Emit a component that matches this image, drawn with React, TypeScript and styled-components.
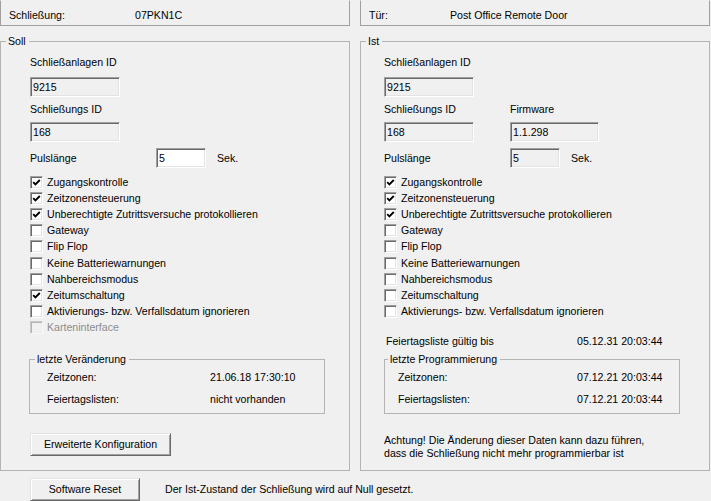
import React from "react";
import styled, { createGlobalStyle } from "styled-components";

const GlobalStyle = createGlobalStyle`
  html, body { margin: 0; padding: 0; background: #f0f0f0; }
  body {
    font-family: "Liberation Sans", Arial, sans-serif;
    font-size: 10.6px;
    color: #000;
  }
  * { box-sizing: border-box; }
`;

const Page = styled.div`
  width: 711px;
  height: 501px;
  overflow: hidden;
  background: #f0f0f0;
  line-height: 13px;
`;

const Columns = styled.div`
  display: grid;
  grid-template-columns: 350px 350px;
  column-gap: 10px;
`;

const Column = styled.div`
  display: flex;
  flex-direction: column;
`;

const HeaderPanel = styled.div`
  height: 26px;
  border: 1px solid #a0a0a0;
  border-top-color: transparent;
  padding: 4px 0 0 8px;
  display: flex;
  align-items: center;
`;

const HeaderLabel = styled.span<{ $w: number }>`
  width: ${(p) => p.$w}px;
  flex: none;
`;

const GroupBox = styled.div<{ $pad: number }>`
  position: relative;
  margin-top: 15px;
  height: 430px;
  border: 1px solid #b4b4b4;
  padding: 14px 0 0 ${(p) => p.$pad}px;
  display: flex;
  flex-direction: column;
  align-items: flex-start;
`;

const Legend = styled.span<{ $left?: number }>`
  position: absolute;
  top: -7px;
  left: ${(p) => p.$left ?? 5}px;
  padding: 0 3px 0 2px;
  background: #f0f0f0;
  line-height: 13px;
  white-space: nowrap;
`;

const FieldLabel = styled.div<{ $mt?: number }>`
  margin-top: ${(p) => p.$mt ?? 0}px;
  height: 13px;
`;

const Row = styled.div<{ $mt?: number }>`
  display: flex;
  align-items: flex-end;
  margin-top: ${(p) => p.$mt ?? 0}px;
`;

const Cell = styled.div<{ $w: number }>`
  width: ${(p) => p.$w}px;
  flex: none;
  display: flex;
  flex-direction: column;
`;

const TextBox = styled.div<{ $w: number; $editable?: boolean; $mt?: number }>`
  width: ${(p) => p.$w}px;
  height: 20px;
  margin-top: ${(p) => p.$mt ?? 0}px;
  flex: none;
  display: flex;
  align-items: center;
  padding-left: 2px;
  background: ${(p) => (p.$editable ? "#ffffff" : "#f0f0f0")};
  border-style: solid;
  border-width: 1px;
  border-color: #a0a0a0 #ffffff #ffffff #a0a0a0;
  box-shadow: inset 1px 1px #696969, inset -1px -1px #e3e3e3;
`;

const PulseRow = styled.div`
  display: flex;
  align-items: center;
  margin-top: 6px;
`;

const PulseLabel = styled.span`
  width: 126px;
  flex: none;
`;

const Unit = styled.span`
  margin-left: 11px;
`;

const CheckList = styled.div`
  display: flex;
  flex-direction: column;
  margin-top: 6px;
`;

const CheckRow = styled.div<{ $disabled?: boolean }>`
  height: 16.2px;
  display: flex;
  align-items: center;
  gap: 4px;
  color: ${(p) => (p.$disabled ? "#8d8d8d" : "#000")};
  white-space: nowrap;
`;

const Box = styled.span<{ $disabled?: boolean }>`
  width: 13px;
  height: 13px;
  flex: none;
  border-style: solid;
  border-width: 1px;
  border-color: ${(p) =>
    p.$disabled ? "#c8c8c8 #f8f8f8 #f8f8f8 #c8c8c8" : "#a0a0a0 #ffffff #ffffff #a0a0a0"};
  box-shadow: ${(p) =>
    p.$disabled
      ? "inset 1px 1px #b4b4b4, inset -1px -1px #ececec"
      : "inset 1px 1px #696969, inset -1px -1px #e3e3e3"};
  background: ${(p) => (p.$disabled ? "#f0f0f0" : "#ffffff")};
  display: flex;
  align-items: center;
  justify-content: center;
`;

const InfoRow = styled.div<{ $mt?: number; $pl?: number }>`
  display: flex;
  align-items: center;
  height: 13px;
  margin-top: ${(p) => p.$mt ?? 0}px;
  padding-left: ${(p) => p.$pl ?? 0}px;
  white-space: nowrap;
`;

const InfoLabel = styled.span<{ $w: number }>`
  width: ${(p) => p.$w}px;
  flex: none;
`;

const SubGroup = styled.div<{ $mt: number; $ml?: number }>`
  position: relative;
  margin-top: ${(p) => p.$mt}px;
  margin-left: ${(p) => p.$ml ?? 0}px;
  width: 296px;
  height: 55px;
  border: 1px solid #b4b4b4;
  padding: 7px 0 2px 0;
  display: flex;
  flex-direction: column;
`;

const SubRow = styled.div<{ $pl: number }>`
  height: 22px;
  display: flex;
  align-items: center;
  padding-left: ${(p) => p.$pl}px;
  white-space: nowrap;
`;

const Button = styled.button<{ $w: number; $mt?: number }>`
  width: ${(p) => p.$w}px;
  height: 23px;
  margin-top: ${(p) => p.$mt ?? 0}px;
  padding: 0;
  font: inherit;
  color: #000;
  background: #f0f0f0;
  border-style: solid;
  border-width: 1px;
  border-color: #e3e3e3 #696969 #696969 #e3e3e3;
  box-shadow: inset 1px 1px #ffffff, inset -1px -1px #a0a0a0;
  flex: none;
`;

const Warning = styled.div`
  margin-top: 20px;
  line-height: 13px;
`;

const Footer = styled.div`
  display: flex;
  align-items: center;
  margin-top: 7px;
  padding-left: 30px;
`;

const FooterText = styled.span`
  margin-left: 25px;
  white-space: nowrap;
`;

const Check = () => (
  <svg width="9" height="9" viewBox="0 0 9 9">
    <path d="M1.2 4.2 L3.4 6.4 L7.8 2" fill="none" stroke="#000" strokeWidth="1.9" />
  </svg>
);

type Opt = { label: string; checked: boolean; disabled?: boolean };

const CheckItem = ({ label, checked, disabled }: Opt) => (
  <CheckRow $disabled={disabled}>
    <Box $disabled={disabled}>{checked && <Check />}</Box>
    <span>{label}</span>
  </CheckRow>
);

const baseOptions = [
  "Zugangskontrolle",
  "Zeitzonensteuerung",
  "Unberechtigte Zutrittsversuche protokollieren",
  "Gateway",
  "Flip Flop",
  "Keine Batteriewarnungen",
  "Nahbereichsmodus",
  "Zeitumschaltung",
  "Aktivierungs- bzw. Verfallsdatum ignorieren",
];

const sollChecked = [true, true, true, false, false, false, false, true, false];
const istChecked = [true, true, true, false, false, false, false, false, false];

export default function App() {
  return (
    <Page>
      <GlobalStyle />
      <Columns>
        <Column>
          <HeaderPanel>
            <HeaderLabel $w={126}>Schließung:</HeaderLabel>
            <span>07PKN1C</span>
          </HeaderPanel>
          <GroupBox $pad={29}>
            <Legend>Soll</Legend>
            <FieldLabel>Schließanlagen ID</FieldLabel>
            <TextBox $w={90} $mt={8}>9215</TextBox>
            <FieldLabel $mt={6}>Schließungs ID</FieldLabel>
            <TextBox $w={90} $mt={6}>168</TextBox>
            <PulseRow>
              <PulseLabel>Pulslänge</PulseLabel>
              <TextBox $w={50} $editable>5</TextBox>
              <Unit>Sek.</Unit>
            </PulseRow>
            <CheckList>
              {baseOptions.map((l, i) => (
                <CheckItem key={l} label={l} checked={sollChecked[i]} />
              ))}
              <CheckItem label="Karteninterface" checked={false} disabled />
            </CheckList>
            <SubGroup $mt={23} $ml={-1}>
              <Legend $left={5}>letzte Veränderung</Legend>
              <SubRow $pl={17}>
                <InfoLabel $w={163}>Zeitzonen:</InfoLabel>
                <span>21.06.18 17:30:10</span>
              </SubRow>
              <SubRow $pl={17}>
                <InfoLabel $w={163}>Feiertagslisten:</InfoLabel>
                <span>nicht vorhanden</span>
              </SubRow>
            </SubGroup>
            <Button $w={141} $mt={19}>Erweiterte Konfiguration</Button>
          </GroupBox>
        </Column>
        <Column>
          <HeaderPanel>
            <HeaderLabel $w={81}>Tür:</HeaderLabel>
            <span>Post Office Remote Door</span>
          </HeaderPanel>
          <GroupBox $pad={23}>
            <Legend>Ist</Legend>
            <FieldLabel>Schließanlagen ID</FieldLabel>
            <TextBox $w={90} $mt={8}>9215</TextBox>
            <Row $mt={6}>
              <Cell $w={126}>
                <FieldLabel>Schließungs ID</FieldLabel>
                <TextBox $w={90} $mt={6}>168</TextBox>
              </Cell>
              <Cell $w={90}>
                <FieldLabel>Firmware</FieldLabel>
                <TextBox $w={89} $mt={6}>1.1.298</TextBox>
              </Cell>
            </Row>
            <PulseRow>
              <PulseLabel>Pulslänge</PulseLabel>
              <TextBox $w={50}>5</TextBox>
              <Unit>Sek.</Unit>
            </PulseRow>
            <CheckList>
              {baseOptions.map((l, i) => (
                <CheckItem key={l} label={l} checked={istChecked[i]} />
              ))}
            </CheckList>
            <InfoRow $mt={15} $pl={2}>
              <InfoLabel $w={191}>Feiertagsliste gültig bis</InfoLabel>
              <span>05.12.31 20:03:44</span>
            </InfoRow>
            <SubGroup $mt={11}>
              <Legend $left={3}>letzte Programmierung</Legend>
              <SubRow $pl={13}>
                <InfoLabel $w={179}>Zeitzonen:</InfoLabel>
                <span>07.12.21 20:03:44</span>
              </SubRow>
              <SubRow $pl={13}>
                <InfoLabel $w={179}>Feiertagslisten:</InfoLabel>
                <span>07.12.21 20:03:44</span>
              </SubRow>
            </SubGroup>
            <Warning>
              Achtung! Die Änderung dieser Daten kann dazu führen,
              <br />
              dass die Schließung nicht mehr programmierbar ist
            </Warning>
          </GroupBox>
        </Column>
      </Columns>
      <Footer>
        <Button $w={110}>Software Reset</Button>
        <FooterText>Der Ist-Zustand der Schließung wird auf Null gesetzt.</FooterText>
      </Footer>
    </Page>
  );
}
